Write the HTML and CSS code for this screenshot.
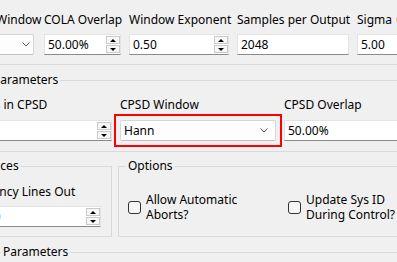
FILE: index.html
```html
<!DOCTYPE html>
<html>
<head>
<meta charset="utf-8">
<link rel="stylesheet" href="styles.css">
</head>
<body>
<div class="page">
  <div class="top">
    <div class="row r1">
      <div class="col c1">
        <div class="lbl">Window</div>
        <div class="combo combo-small">
          <span class="combo-text"></span>
          <svg class="chev" width="8" height="5" viewBox="0 0 8 5"><path d="M0.5 0.5 L4 4 L7.5 0.5" fill="none" stroke="#555" stroke-width="1"/></svg>
        </div>
      </div>
      <div class="col c2">
        <div class="lbl">COLA Overlap</div>
        <div class="field"><span class="val">50.00%</span><div class="spin"><div class="sb up"></div><div class="sb down"></div></div></div>
      </div>
      <div class="col c3">
        <div class="lbl">Window Exponent</div>
        <div class="field"><span class="val">0.50</span><div class="spin"><div class="sb up"></div><div class="sb down"></div></div></div>
      </div>
      <div class="col c4">
        <div class="lbl">Samples per Output</div>
        <div class="field"><span class="val">2048</span></div>
      </div>
      <div class="col c5">
        <div class="lbl">Sigma<span class="dot"></span></div>
        <div class="field"><span class="val">5.00</span></div>
      </div>
    </div>
  </div>

  <fieldset class="group g-cpsd">
    <legend>Parameters</legend>
    <div class="row r2">
      <div class="col d1">
        <div class="lbl lbl-d1">Lines in CPSD</div>
        <div class="field"><span class="val"></span><div class="spin"><div class="sb up"></div><div class="sb down"></div></div></div>
      </div>
      <div class="col d2">
        <div class="lbl">CPSD Window</div>
        <div class="highlight">
          <div class="combo combo-hann">
            <span class="combo-text">Hann</span>
            <svg class="chev" width="8" height="5" viewBox="0 0 8 5"><path d="M0.5 0.5 L4 4 L7.5 0.5" fill="none" stroke="#555" stroke-width="1"/></svg>
          </div>
        </div>
      </div>
      <div class="col d3">
        <div class="lbl">CPSD Overlap</div>
        <div class="field"><span class="val">50.00%</span></div>
      </div>
    </div>
  </fieldset>

  <div class="r3">
    <fieldset class="group g-lines">
      <legend>Choices</legend>
      <div class="lbl lbl-lines">Frequency Lines Out</div>
      <div class="field"><span class="val val-lines">400</span><div class="spin"><div class="sb up"></div><div class="sb down"></div></div></div>
    </fieldset>
    <fieldset class="group g-options">
      <legend>Options</legend>
      <div class="checks">
        <label class="check"><span class="box"></span><span class="ctext">Allow Automatic<br>Aborts?</span></label>
        <label class="check"><span class="box"></span><span class="ctext">Update Sys ID<br>During Control?</span></label>
      </div>
    </fieldset>
  </div>

  <fieldset class="group g-bottom">
    <legend>Parameters</legend>
  </fieldset>
</div>
</body>
</html>
```
FILE: styles.css
```css
html, body {
  margin: 0;
  padding: 0;
}
body {
  width: 397px;
  height: 262px;
  overflow: hidden;
  background: #f0f0f0;
  font-family: "Noto Sans", "Open Sans", sans-serif;
  font-size: 12px;
  color: #000;
}
.page {
  width: 397px;
  height: 262px;
  overflow: hidden;
}
.lbl {
  line-height: 16px;
  white-space: nowrap;
}
.row {
  display: flex;
  gap: 8px;
}
.col {
  flex: none;
}

/* top row */
.top {
  padding: 12px 0 9px;
  border-bottom: 1px solid #d9d9d9;
}
.r1 {
  margin-left: -4px;
}
.r1 .lbl {
  margin-bottom: 6px;
}
.c1 { width: 40px; }
.c2 { width: 77px; }
.c3 { width: 100px; }
.c4 { width: 112px; }
.c5 { width: 80px; }

.dot {
  display: inline-block;
  width: 4px;
  height: 5px;
  margin-left: 4px;
  border-radius: 2px;
  background: #f3c56a;
  vertical-align: 2px;
}

/* inputs */
.field {
  box-sizing: border-box;
  height: 21px;
  background: #fff;
  border: 1px solid #e3e3e3;
  border-bottom-color: #8a8a8a;
  display: flex;
  align-items: center;
  padding-left: 3px;
  white-space: nowrap;
  overflow: hidden;
}
.val {
  flex: 1;
}
.spin {
  flex: none;
  align-self: flex-start;
  margin-top: 1px;
  width: 14px;
  height: 17px;
  display: flex;
  flex-direction: column;
  gap: 1px;
}
.sb {
  flex: 1;
  box-sizing: border-box;
  border: 1px solid #c9c9c9;
  background: #f7f7f7;
  display: flex;
  align-items: center;
  justify-content: center;
}
.sb::before {
  content: "";
  width: 0;
  height: 0;
  border-left: 3px solid transparent;
  border-right: 3px solid transparent;
}
.up::before {
  border-bottom: 3px solid #000;
}
.down::before {
  border-top: 3px solid #000;
}

.combo {
  box-sizing: border-box;
  height: 21px;
  background: #fdfdfd;
  border: 1px solid #d6d6d6;
  border-bottom-color: #c2c2c2;
  border-radius: 2px;
  display: flex;
  align-items: center;
  padding-left: 3px;
}
.combo-text {
  flex: 1;
}
.combo-small {
  margin-right: 2px;
  padding-right: 3px;
}
.highlight {
  margin: -6px;
  padding: 4px;
  border: 2px solid #f00;
}
.combo-hann {
  padding-right: 7px;
}
.chev {
  display: block;
  flex: none;
}

/* group boxes */
.group {
  border: 1px solid #d9d9d9;
  margin: 0;
  min-width: 0;
}
.group legend {
  padding: 0 2px;
  line-height: 16px;
}
.g-cpsd {
  margin: 7px -20px 0 -20px;
  padding: 9px 0 10px 0;
}
.g-cpsd legend {
  margin-left: 10px;
}
.r2 .lbl {
  margin-bottom: 7px;
}
.d1 { width: 131px; }
.d2 { width: 156px; }
.d3 { width: 150px; }
.lbl-d1 {
  margin-left: -10px;
}

.r3 {
  display: flex;
  gap: 6px;
  margin: 6px 0 0 -40px;
}
.g-lines {
  flex: none;
  box-sizing: border-box;
  width: 152px;
  padding: 10px 10px 9px 0;
}
.g-lines legend {
  margin-left: 12px;
}
.lbl-lines {
  margin-left: -1px;
  margin-bottom: 6px;
}
.val-lines {
  padding-left: 15px;
}
.g-options {
  flex: none;
  width: 300px;
  padding: 18px 0 0 9px;
}
.g-options legend {
  margin-left: -2px;
}
.checks {
  display: grid;
  grid-template-columns: 160px auto;
}
.check {
  display: flex;
  align-items: center;
  gap: 5px;
}
.box {
  flex: none;
  box-sizing: border-box;
  width: 13px;
  height: 13px;
  border: 1px solid #333;
  border-radius: 3px;
  background: #f7f7f7;
}
.ctext {
  line-height: 15px;
}

.g-bottom {
  margin: 7px -20px 0 -15px;
  padding: 0;
  height: 40px;
}
.g-bottom legend {
  margin-left: 15px;
}
```
